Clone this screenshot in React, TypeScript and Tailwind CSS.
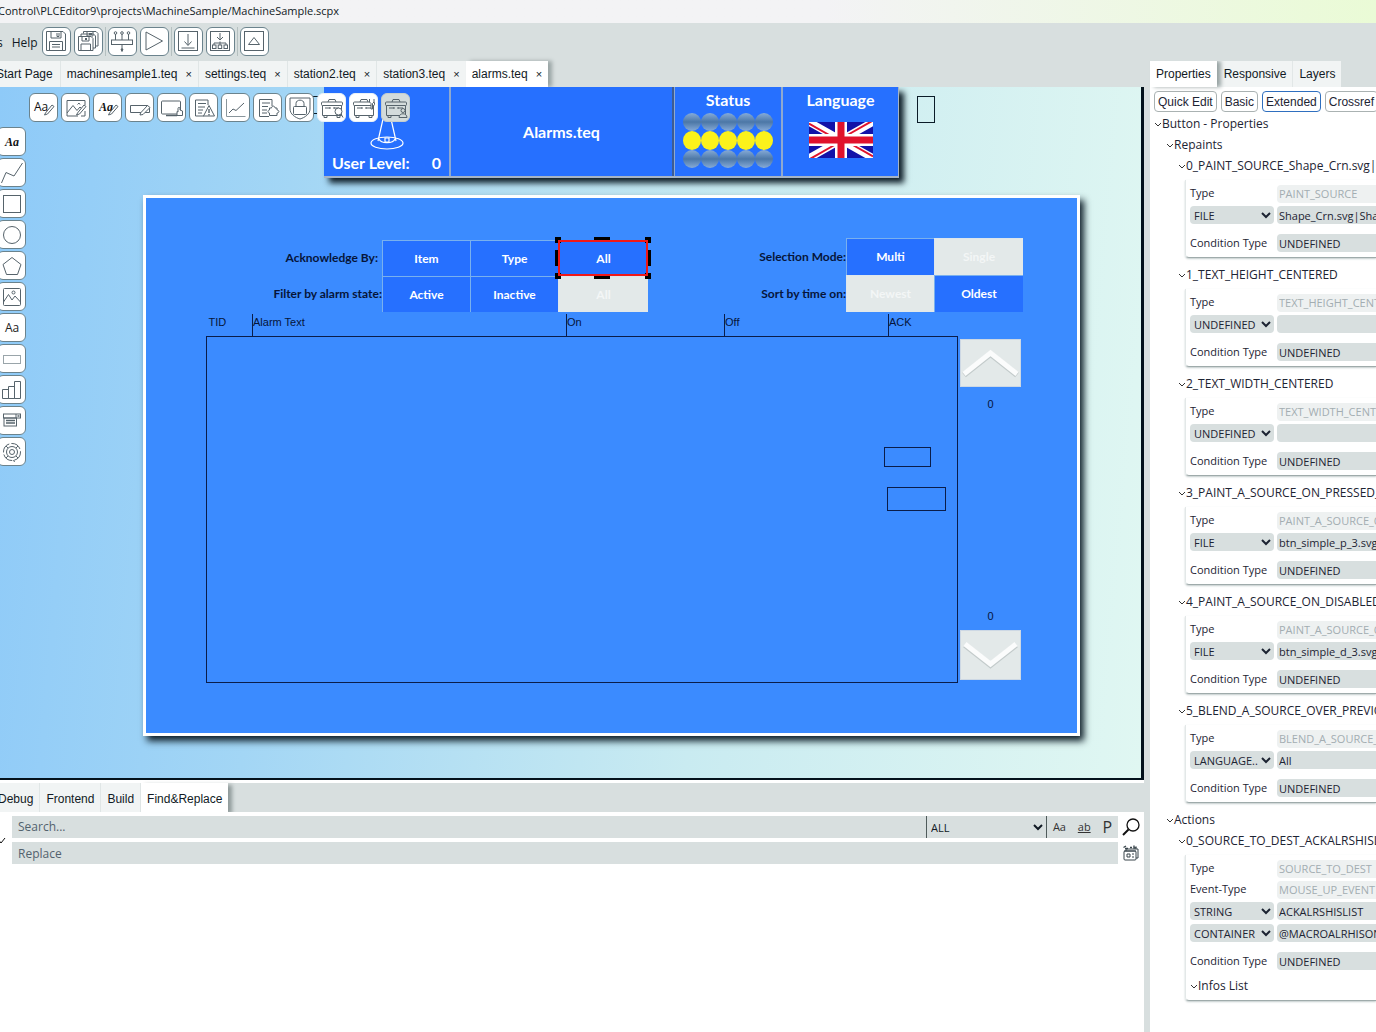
import type { ReactNode } from 'react';
import clsx from 'clsx';

interface IconProps {
  children: ReactNode;
}

function Icon({ children }: IconProps) {
  return (
    <svg
      viewBox="0 0 24 24"
      className="size-6 shrink-0"
      fill="none"
      stroke="#56636b"
      strokeWidth={1}
      aria-hidden="true"
    >
      {children}
    </svg>
  );
}

interface ToolProps {
  label: string;
  children: ReactNode;
  tone?: 'white' | 'plain' | 'gray';
}

function ToolButton({ label, children, tone = 'white' }: ToolProps) {
  return (
    <button
      type="button"
      aria-label={label}
      className={clsx(
        'flex size-[29px] shrink-0 items-center justify-center rounded-md border',
        tone === 'white' && 'border-[#6b838d] bg-white',
        tone === 'plain' && 'border-[#e9f1f7] bg-white',
        tone === 'gray' && 'border-[#c5cdcd] bg-[#d3dbdb]',
      )}
    >
      {children}
    </button>
  );
}

const pencil = <path d="M13.5 17 L20 9 L22 10.5 L15.5 18 L12.5 19 Z" fill="#fff" />;

const suitcase = (
  <>
    <rect x="1.5" y="6" width="21" height="3.5" rx="1" />
    <path d="M2.5 9.500 V19.500 H21.500 V9.500 M8 6 L9 3.500 H15 L16 6 M10 12 H5 M19 12 H14 M10 11 V13 M14 11 V13" />
    <path d="M4 19.500 V21.500 H7 V19.500 M17 19.500 V21.500 H20 V19.500" />
  </>
);

const save = (
  <>
    <path d="M2.5 2.5 H19 L21.5 5 V21.5 H2.5 Z" />
    <path d="M7 2.5 V9 H17 V2.5 M13 4 V7.5 H15 V4 M5.5 21.5 V12.5 H18.5 V21.5 M8 15.5 H16 M8 18 H16" />
  </>
);

const mainTools: { label: string; icon: ReactNode }[][] = [
  [
    { label: 'Save', icon: <Icon>{save}</Icon> },
    {
      label: 'Save all',
      icon: (
        <Icon>
          <path d="M2.5 7.5 H15 L17 9.5 V21.5 H2.5 Z M5 21.5 V15 H14.5 V21.5 M6 7.5 V12 H13 V7.5" />
          <path d="M5 7 V5 H17.5 L19.5 7 V19 H17 M7.5 4.5 V2.5 H20 L22 4.5 V17 H20 M11 3 V7 H17 V3" />
          <path d="M13 5 H16 M10 9 V11" strokeWidth={2} />
        </Icon>
      ),
    },
  ],
  [
    {
      label: 'Bus configuration',
      icon: (
        <Icon>
          <rect x="1.5" y="11" width="21" height="4.5" />
          <path d="M5.5 5 V11 M12 5 V11 M18.5 5 V11 M12 15.5 V22" />
          <circle cx="5.5" cy="4" r="1.3" />
          <circle cx="12" cy="4" r="1.3" />
          <circle cx="18.5" cy="4" r="1.3" />
          <path d="M11 20 L12 22.5 L13 20 Z" fill="#56636b" />
        </Icon>
      ),
    },
    {
      label: 'Run',
      icon: (
        <Icon>
          <path d="M4 3 L20.5 12 L4 21 Z" />
        </Icon>
      ),
    },
  ],
  [
    {
      label: 'Download',
      icon: (
        <Icon>
          <rect x="2.5" y="2.5" width="19" height="19" />
          <path d="M12 5 V16 M8.5 12.5 L12 16.5 L15.5 12.5 M5.5 19 H18.5" />
        </Icon>
      ),
    },
    {
      label: 'Download to all',
      icon: (
        <Icon>
          <rect x="2.5" y="2.5" width="19" height="19" />
          <path d="M12 4 V10 M9 8 L12 11 L15 8 M12 12.5 V16 M6 16 V14 H18 V16" />
          <rect x="4.5" y="16" width="3.5" height="3.5" />
          <rect x="10.2" y="16" width="3.5" height="3.5" />
          <rect x="16" y="16" width="3.5" height="3.5" />
        </Icon>
      ),
    },
  ],
  [
    {
      label: 'Upload',
      icon: (
        <Icon>
          <rect x="2.5" y="2.5" width="19" height="19" />
          <path d="M12 8.5 L17.5 15.5 H6.5 Z" />
        </Icon>
      ),
    },
  ],
];

const canvasTools: { label: string; icon: ReactNode }[] = [
  {
    label: 'Edit text',
    icon: (
      <Icon>
        <text x="2" y="15" fontSize="12" fontFamily="Open Sans, sans-serif" fill="#111" stroke="none">Aa</text>
        {pencil}
      </Icon>
    ),
  },
  {
    label: 'Edit image',
    icon: (
      <Icon>
        <path d="M14 20 H3 V4.500 H21 V9 M21 15 V20 H17" />
        <path d="M3 17 L9 9.500 L13 14.500 L16 11 L18 13 M13.500 8.500 L15 7 L16 8.500" />
        {pencil}
      </Icon>
    ),
  },
  {
    label: 'Edit styled text',
    icon: (
      <Icon>
        <text x="3" y="15" fontSize="12" fontStyle="italic" fontWeight="bold" fontFamily="Liberation Serif, serif" fill="#111" stroke="none">Aa</text>
        {pencil}
      </Icon>
    ),
  },
  {
    label: 'Edit button',
    icon: (
      <Icon>
        <path d="M13 16.500 H2.5 V9.500 H20 M21.500 12 V16.500 H17" />
        <path d="M12.500 17 L19.500 9.500 L22 11.500 L15 18.500 L12 19 Z" fill="#fff" />
      </Icon>
    ),
  },
  {
    label: 'Edit screen',
    icon: (
      <Icon>
        <rect x="1.5" y="5" width="19" height="13" rx="1" />
        <path d="M6 19.500 H17" strokeWidth={1.5} />
        <path d="M18 16 V12.500 C18 11 20 11 20 12.500 V14 L22.500 15 V19.500 H17 V15.500 Z" fill="#fff" />
      </Icon>
    ),
  },
  {
    label: 'Alarm list',
    icon: (
      <Icon>
        <path d="M16 9 V4 H3.5 V20 H12 M6 7.500 H14 M6 11 H13 M6 14 H11 M6 17 H10" />
        <path d="M17 9.500 L22.500 20 H11.5 Z" fill="#fff" />
        <path d="M17 13 V17 M17 18 V19.500" strokeWidth={1.4} />
      </Icon>
    ),
  },
  {
    label: 'Trend',
    icon: (
      <Icon>
        <path d="M2.5 3 V20.5 H21.500" stroke="#8a969c" />
        <path d="M5 17 L9 13 L12 14.500 L20 7" />
      </Icon>
    ),
  },
  {
    label: 'Recipe list',
    icon: (
      <Icon>
        <path d="M16 10 V3.5 H3.5 V20.5 H13 M6 7 H14 M6 10.5 H12 M6 14 H11 M6 17 H11" />
        <path d="M13.500 12 H15.500 C15.500 9.500 19 9.500 19 12 H21 V14 C23.500 14 23.500 17 21 17 V19.500 H13.500 V17 C11.500 17 11.500 14 13.500 14 Z" fill="#fff" />
      </Icon>
    ),
  },
  {
    label: 'User rights',
    icon: (
      <Icon>
        <path d="M2 2 H22 V13 C22 18 17 21.500 12 23 C7 21.500 2 18 2 13 Z" />
        <rect x="5.500" y="10.500" width="13" height="8" rx="1" />
        <path d="M8 10.500 V7.500 C8 3 16 3 16 7.500 V10.500" />
      </Icon>
    ),
  },
];

const caseTools: { label: string; icon: ReactNode; tone: 'plain' | 'gray' }[] = [
  {
    label: 'Search toolbox',
    tone: 'plain',
    icon: (
      <Icon>
        {suitcase}
        <circle cx="18.500" cy="15.500" r="3.5" fill="#fff" />
        <path d="M21 18 L23 21.5" />
      </Icon>
    ),
  },
  {
    label: 'Service toolbox',
    tone: 'plain',
    icon: (
      <Icon>
        {suitcase}
        <path d="M17.500 3 V6 L19 7.500 V13 H20.500 V7.500 L22 6 V3" fill="#fff" />
      </Icon>
    ),
  },
  {
    label: 'User toolbox',
    tone: 'gray',
    icon: (
      <Icon>
        {suitcase}
        <circle cx="19" cy="14.500" r="2" fill="#d3dbdb" />
        <path d="M15 21.500 C15 16.500 23 16.500 23 21.500 Z" fill="#d3dbdb" />
      </Icon>
    ),
  },
];

const shapeTools: { label: string; icon: ReactNode }[] = [
  {
    label: 'Styled text',
    icon: (
      <Icon>
        <text x="5" y="16" fontSize="12" fontStyle="italic" fontWeight="bold" fontFamily="Liberation Serif, serif" fill="#111" stroke="none">Aa</text>
      </Icon>
    ),
  },
  {
    label: 'Line',
    icon: (
      <Icon>
        <path d="M1.5 22 L6 11.5 L14 15 L22.5 2" />
      </Icon>
    ),
  },
  {
    label: 'Rectangle',
    icon: (
      <Icon>
        <rect x="3.500" y="3.5" width="17" height="17" />
      </Icon>
    ),
  },
  {
    label: 'Circle',
    icon: (
      <Icon>
        <circle cx="12" cy="12" r="8.5" />
      </Icon>
    ),
  },
  {
    label: 'Polygon',
    icon: (
      <Icon>
        <path d="M12 3.5 L21 10.5 L17.5 20.5 H6.5 L3 10.5 Z" />
      </Icon>
    ),
  },
  {
    label: 'Image',
    icon: (
      <Icon>
        <rect x="3.500" y="3.5" width="17" height="17" rx="1" />
        <path d="M3.500 17 L8.5 9.5 L12 15 L15 11 L20.5 17" />
        <circle cx="13.5" cy="7.5" r="1.5" />
      </Icon>
    ),
  },
  {
    label: 'Text',
    icon: (
      <Icon>
        <text x="5" y="16" fontSize="12" fontFamily="Open Sans, sans-serif" fill="#222" stroke="none">Aa</text>
      </Icon>
    ),
  },
  {
    label: 'Button',
    icon: (
      <Icon>
        <rect x="3.5" y="8.5" width="17" height="8" stroke="#9aa5aa" />
      </Icon>
    ),
  },
  {
    label: 'Bar chart',
    icon: (
      <Icon>
        <path d="M2.5 20.5 V11.5 H8.5 V20.5 Z M8.5 20.5 V8.500 H14.5 V20.5 Z M14.5 20.5 V3.500 H20.5 V20.5 Z" />
      </Icon>
    ),
  },
  {
    label: 'Combo box',
    icon: (
      <Icon>
        <rect x="3.5" y="5" width="17" height="4" />
        <path d="M16 5 V9" />
        <rect x="4" y="9" width="12.5" height="8" />
        <path d="M6 11.5 H15 M6 14 H15 M17.5 7 H19.5" strokeWidth={1.4} />
      </Icon>
    ),
  },
  {
    label: 'Gauge',
    icon: (
      <Icon>
        <circle cx="12" cy="12" r="8.5" strokeDasharray="11 2" />
        <circle cx="12" cy="12" r="5.5" />
        <circle cx="12" cy="12" r="2.5" />
        <path d="M6 6 L8 8 M18 6 L16 8 M6 18 L8 16 M18 18 L16 16 M13 20.500 L15 21.500" />
      </Icon>
    ),
  },
];

const fileTabs = ['machinesample1.teq', 'settings.teq', 'station2.teq', 'station3.teq', 'alarms.teq'];

interface PropertyRow {
  label?: string;
  select?: string;
  value: string;
  disabled?: boolean;
}

interface PropertyGroup {
  title: string;
  rows: PropertyRow[];
}

const repaints: PropertyGroup[] = [
  {
    title: '0_PAINT_SOURCE_Shape_Crn.svg|Shape_Crn.svg',
    rows: [
      { label: 'Type', value: 'PAINT_SOURCE', disabled: true },
      { select: 'FILE', value: 'Shape_Crn.svg|Shape_Crn.svg' },
    ],
  },
  {
    title: '1_TEXT_HEIGHT_CENTERED',
    rows: [
      { label: 'Type', value: 'TEXT_HEIGHT_CENTERED', disabled: true },
      { select: 'UNDEFINED', value: '' },
    ],
  },
  {
    title: '2_TEXT_WIDTH_CENTERED',
    rows: [
      { label: 'Type', value: 'TEXT_WIDTH_CENTERED', disabled: true },
      { select: 'UNDEFINED', value: '' },
    ],
  },
  {
    title: '3_PAINT_A_SOURCE_ON_PRESSED_btn_simple_p_3.svg',
    rows: [
      { label: 'Type', value: 'PAINT_A_SOURCE_ON_PRESSED', disabled: true },
      { select: 'FILE', value: 'btn_simple_p_3.svg|btn_simple_p_3.svg' },
    ],
  },
  {
    title: '4_PAINT_A_SOURCE_ON_DISABLED_btn_simple_d_3.svg',
    rows: [
      { label: 'Type', value: 'PAINT_A_SOURCE_ON_DISABLED', disabled: true },
      { select: 'FILE', value: 'btn_simple_d_3.svg|btn_simple_d_3.svg' },
    ],
  },
  {
    title: '5_BLEND_A_SOURCE_OVER_PREVIOUS',
    rows: [
      { label: 'Type', value: 'BLEND_A_SOURCE_OVER_PREVIOUS', disabled: true },
      { select: 'LANGUAGE...', value: 'All' },
    ],
  },
];

const actions: PropertyGroup[] = [
  {
    title: '0_SOURCE_TO_DEST_ACKALRSHISLIST',
    rows: [
      { label: 'Type', value: 'SOURCE_TO_DEST', disabled: true },
      { label: 'Event-Type', value: 'MOUSE_UP_EVENT', disabled: true },
      { select: 'STRING', value: 'ACKALRSHISLIST' },
      { select: 'CONTAINER', value: '@MACROALRHISON' },
    ],
  },
];

function Chevron() {
  return (
    <svg viewBox="0 0 8 8" className="size-2 shrink-0" fill="none" stroke="#333" strokeWidth={1} aria-hidden="true">
      <path d="M1 3 L4 6 L7 3" />
    </svg>
  );
}

function TreeHeading({ children, indent }: { children: ReactNode; indent: string }) {
  return (
    <button type="button" className={clsx('flex h-[21px] w-full items-center whitespace-nowrap text-left', indent)}>
      <Chevron />
      {children}
    </button>
  );
}

function PropertyCard({ group, footer }: { group: PropertyGroup; footer?: ReactNode }) {
  return (
    <section className="mb-1.5">
      <TreeHeading indent="pl-7">{group.title}</TreeHeading>
      <div className="mt-1 ml-[35px] rounded-bl-sm border-b border-l border-b-[#9fabab] border-l-[#e3e8e8] pt-[3px] pb-1 pl-1 text-[11px] shadow-[0_1px_2px_#c3cccc]">
        {group.rows.map((row, i) => (
          <div key={i} className={clsx('flex items-center gap-[3px]', row.select ? 'h-[22px]' : 'h-[21px]')}>
            {row.select ? (
              <select
                aria-label={`${group.title} source ${i}`}
                className="h-[18px] w-[84px] shrink-0 rounded-sm bg-[#d8dfdf] text-[11px]"
              >
                <option>{row.select}</option>
              </select>
            ) : (
              <label htmlFor={`${group.title}-${i}`} className="w-[84px] shrink-0">
                {row.label}
              </label>
            )}
            <input
              id={`${group.title}-${i}`}
              aria-label={row.select ? `${group.title} value` : undefined}
              defaultValue={row.value}
              disabled={row.disabled}
              className="h-[18px] min-w-0 flex-1 rounded-l-sm bg-[#d8dfdf] pl-0.5 disabled:bg-[#eef1f1] disabled:text-[#a3adb2]"
            />
          </div>
        ))}
        <div className="mt-[7px] flex h-5 items-center gap-[3px]">
          <label htmlFor={`${group.title}-cond`} className="w-[84px] shrink-0">
            Condition Type
          </label>
          <input
            id={`${group.title}-cond`}
            defaultValue="UNDEFINED"
            className="h-[18px] min-w-0 flex-1 rounded-l-sm bg-[#d8dfdf] pl-0.5"
          />
        </div>
        {footer}
      </div>
    </section>
  );
}

function PropertiesPanel() {
  return (
    <aside className="flex w-[232px] shrink-0 flex-col overflow-hidden">
      <div className="flex h-[26px] bg-[#d8dfdf] pl-1.5" role="tablist">
        {['Properties', 'Responsive', 'Layers'].map((tab, i) => (
          <button
            key={tab}
            type="button"
            role="tab"
            aria-selected={i === 0}
            className={clsx(
              'px-1.5',
              i === 0 ? 'z-10 bg-white shadow-[4px_0_4px_#9aa5a5]' : 'border-l border-[#e2e7e7] bg-[#f1f4f4]',
            )}
          >
            {tab}
          </button>
        ))}
      </div>
      <div className="flex-1 border-l-6 border-[#d8dfdf] text-[#1d2433]">
        <div className="flex gap-1 pt-1 pl-1">
          {['Quick Edit', 'Basic', 'Extended', 'Crossref'].map((mode) => (
            <button
              key={mode}
              type="button"
              className={clsx(
                'h-[21px] shrink-0 rounded border px-[3px]',
                mode === 'Extended' ? 'border-[#2f6fbf]' : 'border-[#aab2b2]',
              )}
            >
              {mode}
            </button>
          ))}
        </div>
        <div className="pt-px font-['Open_Sans',sans-serif]">
          <TreeHeading indent="pl-1">Button - Properties</TreeHeading>
          <TreeHeading indent="pl-4">Repaints</TreeHeading>
          {repaints.map((group) => (
            <PropertyCard key={group.title} group={group} />
          ))}
          <TreeHeading indent="pl-4">Actions</TreeHeading>
          {actions.map((group) => (
            <PropertyCard
              key={group.title}
              group={group}
              footer={
                <div className="pt-1 text-xs">
                  <TreeHeading indent="pl-0">Infos List</TreeHeading>
                </div>
              }
            />
          ))}
        </div>
      </div>
    </aside>
  );
}

interface HmiButtonProps {
  children: ReactNode;
  off?: boolean;
}

function HmiButton({ children, off }: HmiButtonProps) {
  return (
    <button
      type="button"
      className={clsx(
        'size-full border-t border-l font-bold',
        off ? 'border-[#dde6ec] bg-[#e3e9e9] text-[#f3f6f6]' : 'border-[#79b0ee] bg-[#2670ff] text-white',
      )}
    >
      {children}
    </button>
  );
}

const handles = [
  '-top-[3px] -left-[3px] size-[6px]',
  '-top-[3px] left-[36px] h-[5px] w-4',
  '-top-[3px] -right-[3px] size-[6px]',
  'top-[10px] -left-[3px] h-4 w-[5px]',
  'top-[10px] -right-[3px] h-4 w-[5px]',
  '-bottom-[3px] -left-[3px] size-[6px]',
  '-bottom-[3px] left-[36px] h-[5px] w-4',
  '-right-[3px] -bottom-[3px] size-[6px]',
];

function SelectionFrame() {
  return (
    <div className="pointer-events-none absolute inset-0">
      {handles.map((pos) => (
        <span key={pos} className={clsx('absolute bg-black', pos)} />
      ))}
      <span className="absolute inset-0 border-2 border-[#f01818]" />
    </div>
  );
}

function UnionJack() {
  return (
    <svg viewBox="0 0 64 36" className="h-9 w-16" preserveAspectRatio="none" aria-label="English" role="img">
      <rect width="64" height="36" fill="#1212a8" />
      <path d="M0 0 L64 36 M64 0 L0 36" stroke="#fff" strokeWidth="7.5" />
      <path d="M0 1.5 L29 18 M64 34.5 L35 18 M64 -1.5 L35 15 M0 37.5 L29 21" stroke="#e0122c" strokeWidth="2" />
      <path d="M32 0 V36 M0 18 H64" stroke="#fff" strokeWidth="12" />
      <path d="M32 0 V36 M0 18 H64" stroke="#e0122c" strokeWidth="7" />
    </svg>
  );
}

function StatusLamps() {
  return (
    <svg viewBox="0 0 92 58" className="h-[58px] w-[92px]" aria-label="Status lamps" role="img">
      <defs>
        <linearGradient id="lamp" x1="0" y1="0" x2="0" y2="1">
          <stop offset="0" stopColor="#86abd8" />
          <stop offset="0.5" stopColor="#4c77a6" />
          <stop offset="1" stopColor="#86abd8" />
        </linearGradient>
      </defs>
      {[0, 1, 2, 3, 4].map((col) => (
        <g key={col}>
          <ellipse cx={10 + col * 18} cy="10" rx="9" ry="9" fill="url(#lamp)" />
          <ellipse cx={10 + col * 18} cy="47" rx="9" ry="9" fill="url(#lamp)" />
          <ellipse cx={10 + col * 18} cy="28.5" rx="9" ry="9.5" fill="#fbf21b" />
        </g>
      ))}
    </svg>
  );
}

function HmiHeader() {
  return (
    <div className="absolute top-0 left-[324px] flex h-[91px] w-[575px] border-r border-b-2 border-[#a5b4c6] bg-[#2670ff] text-base font-bold text-white shadow-[5px_5px_6px_#10202a]">
      <div className="flex w-[127px] flex-col items-center justify-end border-r-2 border-[#8fa9cf] pb-[3px]">
        <svg viewBox="0 0 36 40" className="h-10 w-9" fill="none" stroke="#fff" strokeWidth={1.2} aria-hidden="true">
          <path d="M14 6 L9 28 M22 6 L27 28 M10 26 C12 31 24 31 26 26 M16 25 H20 V29 H16 Z" />
          <ellipse cx="18" cy="30" rx="16" ry="6" />
        </svg>
        <p className="flex w-full justify-between px-2 leading-5">
          <span>User Level:</span>
          <span>0</span>
        </p>
      </div>
      <div className="flex w-[223px] items-center justify-center border-r-2 border-[#3c5c94]">Alarms.teq</div>
      <div className="flex w-[109px] flex-col items-center border-r-2 border-l border-[#8fa9cf] pt-px">
        <span>Status</span>
        <StatusLamps />
      </div>
      <div className="flex flex-1 flex-col items-center gap-2.5 pt-px">
        <span>Language</span>
        <UnionJack />
      </div>
    </div>
  );
}

function AlarmPanel() {
  return (
    <div className="absolute top-[108px] left-[143px] h-[541px] w-[937px] border-3 border-white bg-[#3b8bff] text-xs text-[#06153a] shadow-[4px_5px_7px_#10202a]">
      <div className="absolute top-[42px] left-[116px] grid auto-rows-[36px] grid-cols-[120px_88px_88px_90px] items-center">
        <span className="pr-1 text-right font-bold">Acknowledge By:</span>
        <HmiButton>Item</HmiButton>
        <HmiButton>Type</HmiButton>
        <div className="relative size-full">
          <HmiButton>All</HmiButton>
          <SelectionFrame />
        </div>
        <span className="text-right font-bold">Filter by alarm state:</span>
        <HmiButton>Active</HmiButton>
        <HmiButton>Inactive</HmiButton>
        <HmiButton off>All</HmiButton>
      </div>

      <div className="absolute top-10 left-[580px] grid auto-rows-[37px] grid-cols-[120px_88px_89px] items-center">
        <span className="text-right font-bold">Selection Mode:</span>
        <HmiButton>Multi</HmiButton>
        <HmiButton off>Single</HmiButton>
        <span className="text-right font-bold">Sort by time on:</span>
        <HmiButton off>Newest</HmiButton>
        <HmiButton>Oldest</HmiButton>
      </div>

      <table className="absolute top-[116px] left-[60px] w-[752px] table-fixed border-collapse font-['Liberation_Sans',Arial,sans-serif] text-[11px]">
        <thead>
          <tr className="h-[22px] text-left leading-4">
            <th className="w-[46px] pl-0.5 align-top font-normal">TID</th>
            <th className="w-[314px] border-l border-[#0a1d4a] align-top font-normal">Alarm Text</th>
            <th className="w-[158px] border-l border-[#0a1d4a] align-top font-normal">On</th>
            <th className="w-[164px] border-l border-[#0a1d4a] align-top font-normal">Off</th>
            <th className="border-l border-[#0a1d4a] align-top font-normal">ACK</th>
          </tr>
        </thead>
        <tbody>
          <tr>
            <td colSpan={5} className="h-[346px] border border-[#0a1d4a]" />
          </tr>
        </tbody>
      </table>

      <div className="absolute top-[249px] left-[738px] h-5 w-[47px] border border-[#0a1d4a]" />
      <div className="absolute top-[289px] left-[741px] h-6 w-[59px] border border-[#0a1d4a]" />

      <div className="absolute top-[141px] left-[814px] flex h-[341px] w-[61px] flex-col items-center justify-between font-['Liberation_Sans',Arial,sans-serif] text-[11px]">
        <div className="flex flex-col items-center gap-2.5">
          <button type="button" aria-label="Scroll up" className="h-12 border border-[#cdd8e4] bg-[#e3e9e9]">
            <svg viewBox="0 0 59 46" className="h-[46px] w-[59px]" fill="none" aria-hidden="true">
              <path d="M3 35 L29.500 14 L56 35" stroke="#c3cbcb" strokeWidth="6" />
              <path d="M3 34 L29.500 13 L56 34" stroke="#fbfcfc" strokeWidth="5" />
            </svg>
          </button>
          <span>0</span>
        </div>
        <div className="flex flex-col items-center gap-1.5">
          <span>0</span>
          <button type="button" aria-label="Scroll down" className="h-[50px] border border-[#cdd8e4] bg-[#e3e9e9]">
            <svg viewBox="0 0 59 48" className="h-12 w-[59px]" fill="none" aria-hidden="true">
              <path d="M4 14 L29.500 34 L55 14" stroke="#c3cbcb" strokeWidth="6" />
              <path d="M4 13 L29.500 33 L55 13" stroke="#fbfcfc" strokeWidth="5" />
            </svg>
          </button>
        </div>
      </div>
    </div>
  );
}

function Canvas() {
  return (
    <div className="relative h-[693px] overflow-hidden border-r-3 border-b-2 border-[#04121c] bg-[linear-gradient(95deg,#8ecaf8_0%,#a3d6f5_25%,#c9ebf1_62%,#e0f7f2_100%)] font-[Lato,Carlito,sans-serif]">
      <HmiHeader />
      <div className="absolute top-[9px] left-[917px] h-[27px] w-[18px] border border-[#0b1c28]" />
      <div className="absolute top-[9px] left-[300px] h-[18px] w-9 border border-[#0b1c28]" />
      <AlarmPanel />
      <div className="absolute top-1.5 left-[29px] flex gap-[3px]">
        {canvasTools.map((tool) => (
          <ToolButton key={tool.label} label={tool.label}>
            {tool.icon}
          </ToolButton>
        ))}
        {caseTools.map((tool) => (
          <ToolButton key={tool.label} label={tool.label} tone={tool.tone}>
            {tool.icon}
          </ToolButton>
        ))}
      </div>
      <div className="absolute top-10 -left-[3px] flex flex-col gap-0.5">
        {shapeTools.map((tool) => (
          <ToolButton key={tool.label} label={tool.label}>
            {tool.icon}
          </ToolButton>
        ))}
      </div>
    </div>
  );
}

function FindReplace() {
  return (
    <section className="flex-1 bg-white">
      <div className="flex h-[29px] bg-[#d8dfdf]" role="tablist">
        {['Debug', 'Frontend', 'Build', 'Find&Replace'].map((tab) => (
          <button
            key={tab}
            type="button"
            role="tab"
            aria-selected={tab === 'Find&Replace'}
            className={clsx(
              'px-1.5 pt-0.5',
              tab === 'Find&Replace'
                ? 'bg-white shadow-[4px_2px_4px_#8f9a9a]'
                : 'border-r border-[#e0e6e6] bg-[#f1f4f4] first:-ml-2',
            )}
          >
            {tab}
          </button>
        ))}
      </div>
      <div className="relative flex items-center gap-1 bg-white pt-1 pr-1 font-['Open_Sans',sans-serif]">
        <button type="button" aria-label="Collapse replace" className="-ml-1 w-3">
          <svg viewBox="0 0 12 12" className="size-3" fill="none" stroke="#111" aria-hidden="true">
            <path d="M1 4 L5 9 L9 4" />
          </svg>
        </button>
        <div className="flex flex-1 flex-col gap-1">
          <div className="flex h-[22px] bg-[#d8dfdf]">
            <input
              aria-label="Search"
              placeholder="Search..."
              className="min-w-0 flex-1 pl-1.5 placeholder:text-[#53626e]"
            />
            <select aria-label="Scope" className="w-[121px] border-x border-[#4f5b5b] text-[11px]">
              <option>ALL</option>
            </select>
            <div className="flex w-[71px] items-center justify-around text-[11px] text-[#333]">
              <button type="button">Aa</button>
              <button type="button" className="underline">ab</button>
              <button type="button" className="text-base leading-5">P</button>
            </div>
          </div>
          <input
            aria-label="Replace"
            placeholder="Replace"
            className="h-[22px] w-full bg-[#d8dfdf] pl-1.5 placeholder:text-[#53626e]"
          />
        </div>
        <div className="flex w-[18px] flex-col gap-2">
          <button type="button" aria-label="Find">
            <svg viewBox="0 0 18 18" className="size-[18px]" fill="none" stroke="#111" aria-hidden="true">
              <circle cx="11" cy="7" r="6" strokeWidth="1.3" />
              <path d="M6.500 11.500 L1 17" strokeWidth="2" />
            </svg>
          </button>
          <button type="button" aria-label="Replace all">
            <svg viewBox="0 0 18 18" className="size-[18px]" fill="none" stroke="#39454b" aria-hidden="true">
              <rect x="2" y="7" width="12" height="9" rx="1" />
              <path d="M2 7 H14 M4 7 V5 H16 V14 H14 M5 10 H8 V13 H5 Z M10 10 H12 M10 13 H12" />
              <path d="M1.500 3.500 L4 2 M3 4.500 H6 M8 3.500 H10 M12 1.500 V4 H14 V2.500" strokeWidth="1.4" />
            </svg>
          </button>
        </div>
      </div>
    </section>
  );
}

export default function App() {
  return (
    <div className="flex min-h-screen flex-col overflow-hidden bg-white font-['Liberation_Sans',Arial,sans-serif] text-xs text-[#111a24]">
      <header className="flex h-[23px] items-center bg-linear-to-r from-[#f3f3f5] from-60% to-[#eafbd6] font-['Open_Sans',sans-serif] text-[11px]">
        <h1 className="-ml-0.5 whitespace-nowrap">Control\PLCEditor9\projects\MachineSample/MachineSample.scpx</h1>
      </header>

      <nav className="flex h-[38px] items-center bg-[#d8dfdf] pb-0.5 font-['Open_Sans',sans-serif]">
        <button type="button" className="-ml-[3px] pt-1">s</button>
        <button type="button" className="mr-0.5 ml-[9px] pt-1">Help</button>
        {mainTools.map((group, i) => (
          <div
            key={i}
            className="flex gap-[3px] border-r border-[#b5c0c0] px-0.5 last:border-r-0"
          >
            {group.map((tool) => (
              <ToolButton key={tool.label} label={tool.label}>
                {tool.icon}
              </ToolButton>
            ))}
          </div>
        ))}
      </nav>

      <div className="flex flex-1">
        <main className="flex min-w-0 flex-1 flex-col">
          <div className="flex h-[26px] bg-[#d8dfdf]" role="tablist">
            <button type="button" role="tab" aria-selected={false} className="-ml-1 bg-[#f1f4f4] pr-[7px]">
              Start Page
            </button>
            {fileTabs.map((tab) => (
              <button
                key={tab}
                type="button"
                role="tab"
                aria-selected={tab === 'alarms.teq'}
                className={clsx(
                  'flex items-center gap-2 px-1.5',
                  tab === 'alarms.teq'
                    ? 'bg-white shadow-[4px_0_4px_#9aa5a5]'
                    : 'border-l border-[#e0e6e6] bg-[#f1f4f4]',
                )}
              >
                {tab}
                <span className="text-[11px]">×</span>
              </button>
            ))}
          </div>
          <Canvas />
          <div className="h-[3px]" />
          <FindReplace />
        </main>
        <PropertiesPanel />
      </div>
    </div>
  );
}
